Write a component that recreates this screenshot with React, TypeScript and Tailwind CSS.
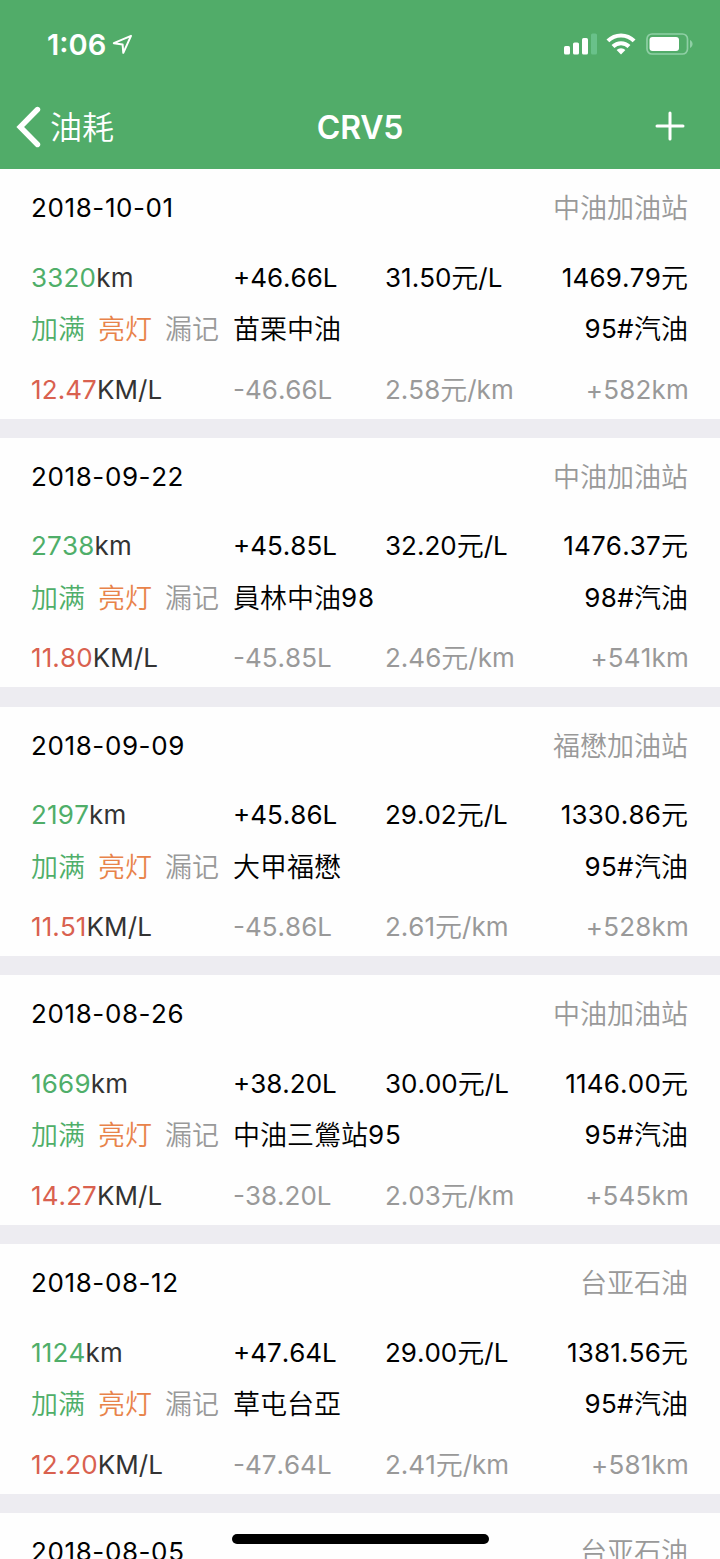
type FuelRecord = {
    date: string
    station: string
    odometer: string
    added: string
    price: string
    total: string
    place: string
    fuel: string
    economy: string
    used: string
    cost: string
    distance: string
}

const RECORDS: FuelRecord[] = [
    { date: '2018-10-01', station: '中油加油站', odometer: '3320', added: '+46.66L', price: '31.50元/L', total: '1469.79元', place: '苗栗中油', fuel: '95#汽油', economy: '12.47', used: '-46.66L', cost: '2.58元/km', distance: '+582km' },
    { date: '2018-09-22', station: '中油加油站', odometer: '2738', added: '+45.85L', price: '32.20元/L', total: '1476.37元', place: '員林中油98', fuel: '98#汽油', economy: '11.80', used: '-45.85L', cost: '2.46元/km', distance: '+541km' },
    { date: '2018-09-09', station: '福懋加油站', odometer: '2197', added: '+45.86L', price: '29.02元/L', total: '1330.86元', place: '大甲福懋', fuel: '95#汽油', economy: '11.51', used: '-45.86L', cost: '2.61元/km', distance: '+528km' },
    { date: '2018-08-26', station: '中油加油站', odometer: '1669', added: '+38.20L', price: '30.00元/L', total: '1146.00元', place: '中油三鶯站95', fuel: '95#汽油', economy: '14.27', used: '-38.20L', cost: '2.03元/km', distance: '+545km' },
    { date: '2018-08-12', station: '台亚石油', odometer: '1124', added: '+47.64L', price: '29.00元/L', total: '1381.56元', place: '草屯台亞', fuel: '95#汽油', economy: '12.20', used: '-47.64L', cost: '2.41元/km', distance: '+581km' },
]

const NEXT_RECORD = { date: '2018-08-05', station: '台亚石油' }

// Chinese runs are set slightly larger than the digits around them
function Mixed({ children }: { children: string }) {
    return (
        <>
            {children.split(/([\u4e00-\u9fff]+)/).filter(Boolean).map((part, i) =>
                /[\u4e00-\u9fff]/.test(part) ? (
                    <span key={i} className="align-[-1px] text-[27px] font-[350] leading-none tracking-normal">{part}</span>
                ) : (
                    <span key={i}>{part}</span>
                )
            )}
        </>
    )
}

function StatusBar() {
    return (
        <div className="flex h-[88px] items-center justify-between pl-[47px] pr-[27px]">
            <div className="flex items-center gap-[6px]">
                <span className="text-[29px] font-semibold leading-none">1:06</span>
                <svg width="21" height="21" viewBox="0 0 21 21" fill="none" stroke="currentColor" strokeWidth="2" strokeLinejoin="round">
                    <path d="M19 1.800 1.800 9.200l8.800 1.200.7 8.400z" />
                </svg>
            </div>
            <div className="flex items-center">
                <svg width="34" height="22" viewBox="0 0 34 22" fill="currentColor">
                    <rect x="1" y="13" width="6" height="8.500" rx="1.600" />
                    <rect x="10" y="9.500" width="6" height="12" rx="1.600" />
                    <rect x="19" y="5" width="6" height="16.500" rx="1.600" />
                    <rect x="28" y="0.500" width="6" height="21" rx="1.600" fill="#69c18a" />
                </svg>
                <svg className="ml-[9px]" width="30" height="22" viewBox="0 0 30 22" fill="none" stroke="currentColor" strokeWidth="4">
                    <path d="M1.900 7.900a18.500 18.500 0 0 1 26.200 0" />
                    <path d="M7 13.500a11.200 11.200 0 0 1 16 0" />
                    <path d="M15 21.400 10.600 17a6.200 6.200 0 0 1 8.800 0z" fill="currentColor" stroke="none" />
                </svg>
                <svg className="ml-[10px]" width="47" height="22" viewBox="0 0 47 22" fill="none">
                    <rect x="1" y="1" width="40.500" height="20" rx="5" stroke="#8fcfa5" strokeWidth="1.700" />
                    <rect x="3.500" y="4" width="29.500" height="14" rx="3" fill="currentColor" />
                    <path d="M44 7c3.400 1.400 3.400 6.600 0 8z" fill="#8fcfa5" />
                </svg>
            </div>
        </div>
    )
}

function NavBar() {
    return (
        <div className="grid h-[77px] grid-cols-3 items-center pl-4 pr-[35px]">
            <div className="flex items-center gap-[9px]">
                <svg width="25" height="42" viewBox="0 0 25 42" fill="none" stroke="currentColor" strokeWidth="5.400" strokeLinecap="round">
                    <path d="M21.500 3.500 4.200 21l17.300 17.500" />
                </svg>
                <span className="pt-[3px] text-[32px] font-[350] leading-none">油耗</span>
            </div>
            <h1 className="ml-[19px] pt-[2px] text-center text-[32px] font-semibold leading-none tracking-[-0.2px]">CRV5</h1>
            <svg className="-mt-[2px] justify-self-end" width="30" height="30" viewBox="0 0 30 30" stroke="currentColor" strokeWidth="3" strokeLinecap="round">
                <path d="M15 2v26M2 15h26" />
            </svg>
        </div>
    )
}

function CardHeader({ date, station }: { date: string; station: string }) {
    return (
        <div className="flex h-[78px] items-center justify-between">
            <span className="tracking-[0.6px]">{date}</span>
            <span className="text-[#999]"><Mixed>{station}</Mixed></span>
        </div>
    )
}

function RecordCard({ record }: { record: FuelRecord }) {
    return (
        <section className="h-[249.6px] shrink-0 bg-[#fefefe] pl-[31px] pr-8">
            <CardHeader date={record.date} station={record.station} />
            <div className="grid h-[61px] grid-cols-[202px_152px_1fr_auto] items-center">
                <span><span className="text-[#4fae69]">{record.odometer}</span><span className="text-[#333]">km</span></span>
                <span className="tracking-normal">{record.added}</span>
                <span className="tracking-normal"><Mixed>{record.price}</Mixed></span>
                <span><Mixed>{record.total}</Mixed></span>
            </div>
            <div className="flex h-[42px] items-center">
                <div className="flex w-[202px] gap-[13px]">
                    <span className="text-[#4fae69]"><Mixed>加满</Mixed></span>
                    <span className="text-[#e8834a]"><Mixed>亮灯</Mixed></span>
                    <span className="text-[#999]"><Mixed>漏记</Mixed></span>
                </div>
                <span className="flex-1 tracking-[0.8px]"><Mixed>{record.place}</Mixed></span>
                <span className="tracking-[0.4px]"><Mixed>{record.fuel}</Mixed></span>
            </div>
            <div className="mt-[11px] grid h-[57px] grid-cols-[202px_152px_1fr_auto] items-center text-[#999]">
                <span className="tracking-[0.1px]"><span className="text-[#d9614f]">{record.economy}</span><span className="text-[#333]">KM/L</span></span>
                <span className="tracking-normal">{record.used}</span>
                <span className="tracking-normal"><Mixed>{record.cost}</Mixed></span>
                <span className="-mr-[1px]">{record.distance}</span>
            </div>
        </section>
    )
}

export default function App() {
    return (
        <div className="relative flex h-[1559px] w-[720px] flex-col overflow-hidden bg-[#edecf1] font-['Inter','Noto_Sans_CJK_SC',sans-serif]">
            <header className="h-[169px] shrink-0 bg-[#51ac69] text-white">
                <StatusBar />
                <NavBar />
            </header>
            <main className="flex flex-col gap-[19.2px] text-[26px] leading-[30px] tracking-[0.2px] text-black [font-kerning:none]">
                {RECORDS.map((record) => (
                    <RecordCard key={record.date} record={record} />
                ))}
                <section className="h-[46px] shrink-0 bg-[#fefefe] pl-[31px] pr-8">
                    <CardHeader date={NEXT_RECORD.date} station={NEXT_RECORD.station} />
                </section>
            </main>
            <div className="absolute bottom-[15px] left-[232px] h-[10px] w-[257px] rounded-full bg-black" />
        </div>
    )
}
